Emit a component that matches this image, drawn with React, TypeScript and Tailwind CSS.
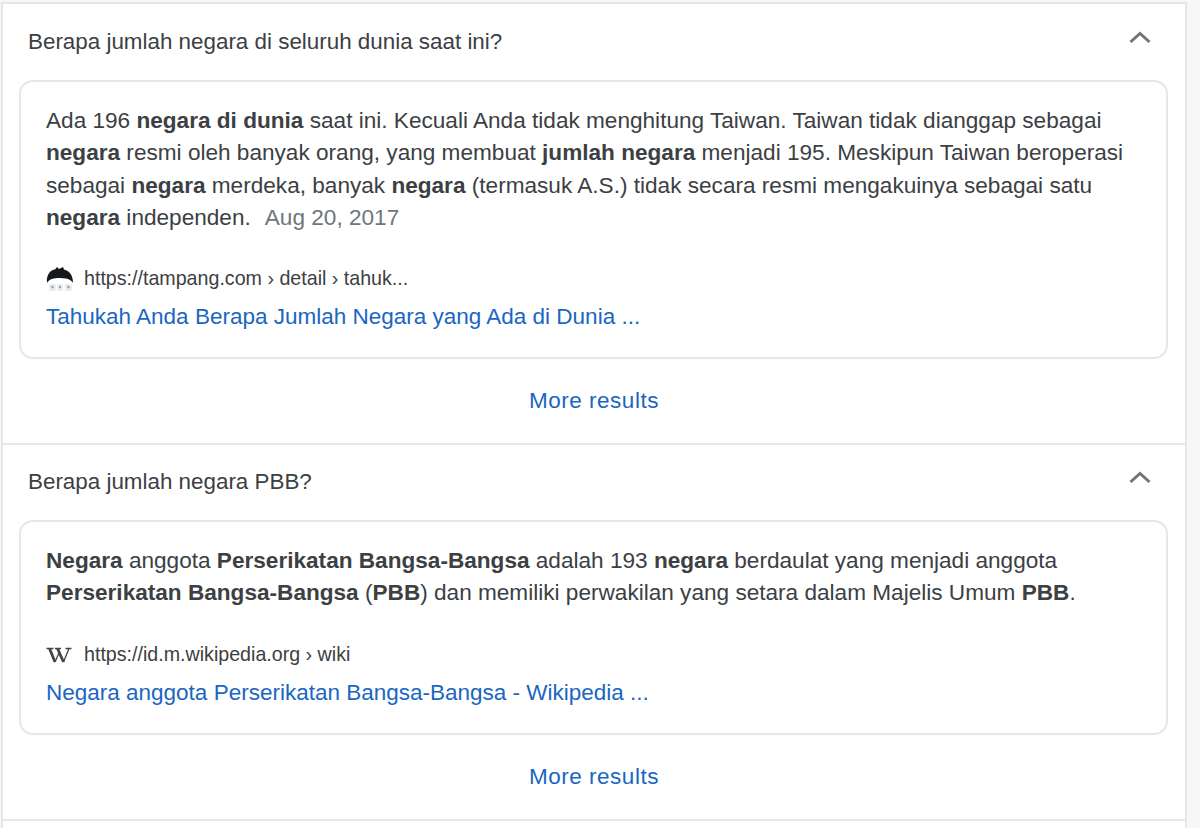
function Chevron() {
  return (
    <svg width="24" height="24" viewBox="0 0 24 24" className="mb-[8px] text-[#70757a]">
      <path d="M2.5 16 L12 7.5 L21.5 16" fill="none" stroke="currentColor" strokeWidth="3" />
    </svg>
  );
}

function TampangIcon() {
  return (
    <svg width="28" height="26" viewBox="0 0 28 26">
      <path d="M1 17 C0 8 5 4 9 3.500 L11 1 L13 3 L17 1 L18 3.500 C24 5 27 10 27 17 C26 15 24 13.500 20 12.500 C15 11.500 9 12 6 13 C4 13.500 2 15 1 17 Z" fill="#16181a" />
      <rect x="3" y="18" width="7" height="7" rx="2" fill="#e6ebee" />
      <rect x="11" y="18" width="6" height="7" rx="2" fill="#e9edef" />
      <rect x="19" y="18" width="7" height="7" rx="2" fill="#e6ebee" />
      <circle cx="6.500" cy="21" r="1.200" fill="#8fa2b0" />
      <circle cx="14" cy="21" r="1.200" fill="#8fa2b0" />
      <circle cx="22.500" cy="21" r="1.200" fill="#8fa2b0" />
    </svg>
  );
}

function WikiIcon() {
  return (
    <svg width="26" height="16" viewBox="0 0 26 16" fill="none" stroke="#444">
      <path d="M0.500 1.500 H7.500 M9 1.500 H15 M19.500 1.500 H25.500 M9 15 L13.500 5 M17.500 15 L23 1.500" strokeWidth="1.300" />
      <path d="M3.500 1.500 L9 15 M11.500 1.500 L17.500 15" strokeWidth="2.800" />
    </svg>
  );
}

function B({ children }: { children: React.ReactNode }) {
  return <b className="font-bold text-[#3c4043]">{children}</b>;
}

function Section({
  question,
  icon,
  url,
  title,
  children,
}: {
  question: string;
  icon: React.ReactNode;
  url: string;
  title: string;
  children: React.ReactNode;
}) {
  return (
    <section className="border-b-2 border-[#e5e6e8]">
      <div className="mb-[1px] flex h-[74px] items-center justify-between pl-[25px] pr-[33px]">
        <h2 className="text-[22.4px] font-normal text-[#3c4043]">{question}</h2>
        <Chevron />
      </div>
      <div className="ml-[16px] mr-[17px] rounded-[14px] border-2 border-[#e6e7e9] pl-[25px] pr-[20px] pt-[23px] pb-[24px]">
        <p className="text-[22.6px] leading-[32.3px] text-[#3c4043]">{children}</p>
        <div className="mt-[29px] flex h-[32px] items-center gap-[10px] text-[19.65px] text-[#3c4043]">
          <span className="flex w-[28px] justify-start">{icon}</span>
          <span>{url}</span>
        </div>
        <a className="mt-[6px] block text-[22.5px] leading-[32px] text-[#1a66c2]">{title}</a>
      </div>
      <div className="flex h-[84px] items-center justify-center text-[22.5px] tracking-[0.5px] text-[#1a66c2]">
        More results
      </div>
    </section>
  );
}

export default function App() {
  return (
    <div className="h-[828px] overflow-hidden bg-[#f7f7f8] font-['Liberation_Sans',Arial,sans-serif]">
      <div className="ml-[1px] mt-[2px] h-[830px] w-[1186px] border-x-2 border-t-2 border-[#e5e6e8] bg-white pt-px">
        <Section
          question="Berapa jumlah negara di seluruh dunia saat ini?"
          icon={<TampangIcon />}
          url="https://tampang.com › detail › tahuk..."
          title="Tahukah Anda Berapa Jumlah Negara yang Ada di Dunia ..."
        >
          Ada 196 <B>negara di dunia</B> saat ini. Kecuali Anda tidak menghitung Taiwan. Taiwan tidak dianggap sebagai{" "}
          <B>negara</B> resmi oleh banyak orang, yang membuat <B>jumlah negara</B> menjadi 195. Meskipun Taiwan beroperasi
          sebagai <B>negara</B> merdeka, banyak <B>negara</B> (termasuk A.S.) tidak secara resmi mengakuinya sebagai satu{" "}
          <B>negara</B> independen.<span className="ml-[14px] text-[#70757a]">Aug 20, 2017</span>
        </Section>
        <Section
          question="Berapa jumlah negara PBB?"
          icon={<WikiIcon />}
          url="https://id.m.wikipedia.org › wiki"
          title="Negara anggota Perserikatan Bangsa-Bangsa - Wikipedia ..."
        >
          <B>Negara</B> anggota <B>Perserikatan Bangsa-Bangsa</B> adalah 193 <B>negara</B> berdaulat yang menjadi anggota{" "}
          <B>Perserikatan Bangsa-Bangsa</B> (<B>PBB</B>) dan memiliki perwakilan yang setara dalam Majelis Umum <B>PBB</B>.
        </Section>
      </div>
    </div>
  );
}
